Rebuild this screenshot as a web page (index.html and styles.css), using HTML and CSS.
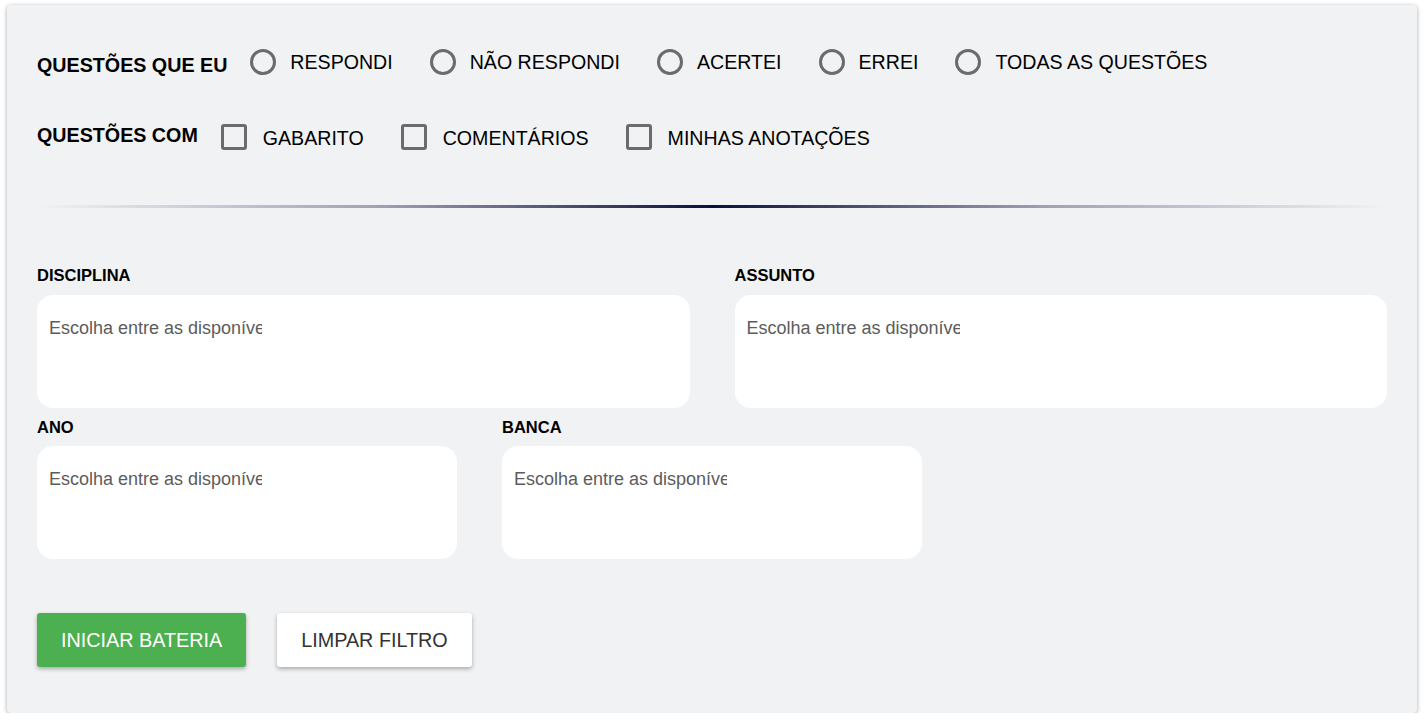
FILE: index.html
```html
<!DOCTYPE html>
<html lang="pt-BR">
<head>
<meta charset="utf-8">
<title>Filtro de questões</title>
<link rel="stylesheet" href="styles.css">
</head>
<body>
<div class="card">
  <div class="opt-row">
    <span class="group-label down">QUESTÕES QUE EU</span>
    <label class="opt"><span class="radio"></span>RESPONDI</label>
    <label class="opt"><span class="radio"></span>NÃO RESPONDI</label>
    <label class="opt"><span class="radio"></span>ACERTEI</label>
    <label class="opt"><span class="radio"></span>ERREI</label>
    <label class="opt"><span class="radio"></span>TODAS AS QUESTÕES</label>
  </div>
  <div class="opt-row row2">
    <span class="group-label up">QUESTÕES COM</span>
    <label class="opt chk"><span class="check"></span>GABARITO</label>
    <label class="opt chk"><span class="check"></span>COMENTÁRIOS</label>
    <label class="opt chk"><span class="check"></span>MINHAS ANOTAÇÕES</label>
  </div>
  <div class="divider"></div>
  <div class="fields two">
    <div class="field">
      <div class="field-label">DISCIPLINA</div>
      <div class="select"><span class="ph">Escolha entre as disponíveis</span></div>
    </div>
    <div class="field">
      <div class="field-label">ASSUNTO</div>
      <div class="select"><span class="ph">Escolha entre as disponíveis</span></div>
    </div>
  </div>
  <div class="fields three">
    <div class="field">
      <div class="field-label">ANO</div>
      <div class="select"><span class="ph">Escolha entre as disponíveis</span></div>
    </div>
    <div class="field">
      <div class="field-label">BANCA</div>
      <div class="select"><span class="ph">Escolha entre as disponíveis</span></div>
    </div>
  </div>
  <div class="actions">
    <button class="btn btn-green">INICIAR BATERIA</button>
    <button class="btn btn-white">LIMPAR FILTRO</button>
  </div>
</div>
</body>
</html>
```
FILE: styles.css
```css
* { box-sizing: border-box; }
html, body { margin: 0; background: #ffffff; }
body {
  padding: 5px 7px 0 7px;
  font-family: "Liberation Sans", Arial, sans-serif;
  color: #000;
}
.card {
  background: #f1f2f4;
  border-radius: 4px;
  box-shadow: 0 1px 4px rgba(0,0,0,0.35);
  padding: 44px 30px 46px 30px;
}
.opt-row {
  display: flex;
  align-items: center;
  height: 26px;
}
.row2 { margin-top: 49px; }
.group-label {
  font-weight: bold;
  font-size: 19.7px;
  line-height: 22px;
  margin-right: 23px;
}
.group-label.down { margin-top: 6px; }
.group-label.up { margin-bottom: 5px; }
.opt {
  display: flex;
  align-items: center;
  font-size: 19.6px;
  line-height: 22px;
  margin-right: 37px;
  color: #000;
}
.radio {
  width: 26px;
  height: 26px;
  border: 3px solid #6b6b6b;
  border-radius: 50%;
  margin-right: 14px;
  flex: none;
}
.check {
  width: 26px;
  height: 26px;
  border: 3px solid #6b6b6b;
  border-radius: 3px;
  margin-right: 16px;
  flex: none;
}
.chk { padding-top: 2px; }
.chk .check { margin-top: -2px; }
.divider {
  height: 3px;
  margin-top: 55px;
  background: linear-gradient(to right, rgba(11,15,63,0) 0%, rgba(11,15,63,0.35) 25%, #0b0f3f 50%, rgba(11,15,63,0.35) 75%, rgba(11,15,63,0) 100%);
}
.fields {
  display: grid;
  column-gap: 45px;
}
.fields.two { grid-template-columns: 1fr 1fr; margin-top: 58px; }
.fields.three { grid-template-columns: 1fr 1fr 1fr; margin-top: 10px; }
.field-label {
  font-weight: bold;
  font-size: 16.5px;
  line-height: 19px;
  margin-bottom: 9px;
}
.select {
  background: #fff;
  border-radius: 16px;
  height: 113px;
  padding: 22px 12px 0 12px;
}
.ph {
  display: block;
  width: 213px;
  overflow: hidden;
  white-space: nowrap;
  font-size: 18px;
  line-height: 22px;
  color: #5c5c5c;
}
.fields.two .field-label { margin-bottom: 10px; }
.actions {
  display: flex;
  gap: 31px;
  margin-top: 54px;
}
.btn {
  height: 54px;
  padding: 0 24px;
  border: none;
  border-radius: 3px;
  font-family: "Liberation Sans", Arial, sans-serif;
  font-size: 19.8px;
  box-shadow: 0 2px 4px rgba(0,0,0,0.3);
}
.btn-green { background: #4caf50; color: #fff; }
.btn-white { background: #fff; color: #333; }
```
